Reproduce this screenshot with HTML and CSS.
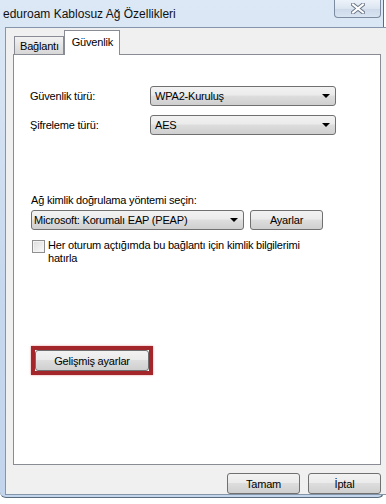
FILE: index.html
```html
<!DOCTYPE html>
<html lang="tr">
<head>
    <meta charset="UTF-8">
    <title>eduroam Kablosuz Ağ Özellikleri</title>
    <link rel="stylesheet" href="styles.css">
</head>
<body>

<div class="window">
    <div class="titlebar">
        <span class="title">eduroam Kablosuz Ağ Özellikleri</span>
        <div class="close">
            <svg width="14" height="11" viewBox="0 0 14 11">
                <path d="M2 1.5 L12 9.5 M12 1.5 L2 9.5" stroke="#6b7686" stroke-width="4" stroke-linecap="square"/>
                <path d="M2 1.5 L12 9.5 M12 1.5 L2 9.5" stroke="#ffffff" stroke-width="2" stroke-linecap="square"/>
            </svg>
        </div>
    </div>

    <div class="client">
        <div class="tabs">
            <div class="tab">Bağlantı</div>
            <div class="tab active">Güvenlik</div>
        </div>

        <div class="page">
            <div class="row">
                <span class="label">Güvenlik türü:</span>
                <div class="select wide">WPA2-Kuruluş<span class="arrow"></span></div>
            </div>
            <div class="row second">
                <span class="label">Şifreleme türü:</span>
                <div class="select wide">AES<span class="arrow"></span></div>
            </div>

            <div class="auth">
                <div class="caption">Ağ kimlik doğrulama yöntemi seçin:</div>
                <div class="auth-row">
                    <div class="select method">Microsoft: Korumalı EAP (PEAP)<span class="arrow"></span></div>
                    <div class="btn settings">Ayarlar</div>
                </div>
                <div class="check-row">
                    <span class="checkbox"></span>
                    <span class="check-text">Her oturum açtığımda bu bağlantı için kimlik bilgilerimi hatırla</span>
                </div>
            </div>

            <div class="highlight">
                <div class="btn advanced">Gelişmiş ayarlar</div>
            </div>
        </div>

        <div class="footer">
            <div class="btn">Tamam</div>
            <div class="btn">İptal</div>
        </div>
    </div>
</div>

</body>
</html>
```

FILE: styles.css
```css
body {
    margin: 0;
    background-color: #ffffff;
    font-family: 'Liberation Sans', Arial, sans-serif;
    font-size: 11px;
    letter-spacing: -0.2px;
    color: #000;
}
.window {
    width: 383px;
    height: 497px;
    background: linear-gradient(#dce8f5, #c6d8ee 60%, #c2d5ec);
    border-right: 1px solid #5b6b7e;
    border-bottom: 1px solid #5b6b7e;
    border-bottom-right-radius: 6px;
    border-bottom-left-radius: 6px;
}
.titlebar {
    height: 27px;
    display: flex;
    justify-content: space-between;
    align-items: flex-start;
}
.title {
    font-size: 12px;
    letter-spacing: 0;
    padding: 7px 0 0 3px;
    color: #111;
}
.close {
    width: 45px;
    height: 17px;
    margin-right: 2px;
    border: 1px solid #7c8ba0;
    border-top: none;
    border-radius: 0 0 4px 4px;
    background: linear-gradient(#eef3fa, #dbe5f1 50%, #cdd9e9 51%, #d9e4f2);
    display: flex;
    justify-content: center;
    align-items: center;
}
.client {
    margin-left: 5px;
    width: 368px;
    height: 466px;
    border: 1px solid #8596ab;
    background-color: #f0f0f0;
    padding: 0 8px 0 7px;
    display: flex;
    flex-direction: column;
}
.tabs {
    height: 28px;
    display: flex;
    align-items: flex-end;
    padding-left: 1px;
}
.tab {
    box-sizing: border-box;
    height: 18px;
    padding: 1px 4px 0 5px;
    border: 1px solid #898c95;
    border-bottom: none;
    background: linear-gradient(#f2f2f2, #e4e4e4 50%, #d7d7d7);
    display: flex;
    align-items: center;
    line-height: 1;
}
.tab.active {
    margin-bottom: -1px;
    padding: 6px 6px 0 7px;
    background: #ffffff;
    align-items: flex-start;
    height: 25px;
    position: relative;
    z-index: 1;
}
.page {
    height: 400px;
    border: 1px solid #898c95;
    background: #ffffff;
    padding: 31px 0 0 16px;
}
.row {
    display: flex;
    align-items: center;
}
.row.second {
    margin-top: 9px;
}
.label {
    width: 120px;
}
.select {
    height: 18px;
    border: 1px solid #707070;
    border-radius: 3px;
    background: linear-gradient(#f2f2f2, #ebebeb 45%, #dddddd 50%, #cfcfcf);
    display: flex;
    align-items: center;
    padding-left: 4px;
}
.select.wide {
    width: 180px;
}
.arrow {
    margin-left: auto;
    margin-right: 5px;
    width: 0;
    height: 0;
    border-left: 4px solid transparent;
    border-right: 4px solid transparent;
    border-top: 4px solid #000;
}
.auth {
    margin-top: 58px;
    padding-left: 1px;
}
.caption {
    height: 15px;
    line-height: 15px;
}
.auth-row {
    margin-top: 2px;
    display: flex;
    gap: 6px;
}
.select.method {
    width: 209px;
    padding-left: 2px;
}
.btn {
    width: 71px;
    height: 19px;
    border: 1px solid #707070;
    border-radius: 3px;
    background: linear-gradient(#f2f2f2, #ebebeb 45%, #dddddd 50%, #cfcfcf);
    display: flex;
    align-items: center;
    justify-content: center;
}
.btn.settings {
    height: 18px;
}
.check-row {
    margin-top: 10px;
    display: flex;
    align-items: flex-start;
    gap: 3px;
}
.checkbox {
    flex: none;
    width: 11px;
    height: 11px;
    margin-left: 1px;
    border: 1px solid #8f8f8f;
    background: linear-gradient(135deg, #dcdcdc, #fbfbfb);
    box-shadow: inset 0 0 0 1px #f4f4f4;
}
.check-text {
    width: 258px;
    line-height: 13px;
    margin-top: -1px;
}
.highlight {
    margin-top: 81px;
    margin-left: 1px;
    width: 114px;
    border: 4px solid #a3262a;
    box-shadow: 0 0 2px rgba(200, 40, 40, 0.5);
}
.btn.advanced {
    width: 112px;
}
.footer {
    margin-top: 8px;
    display: flex;
    justify-content: flex-end;
    gap: 8px;
}
```
